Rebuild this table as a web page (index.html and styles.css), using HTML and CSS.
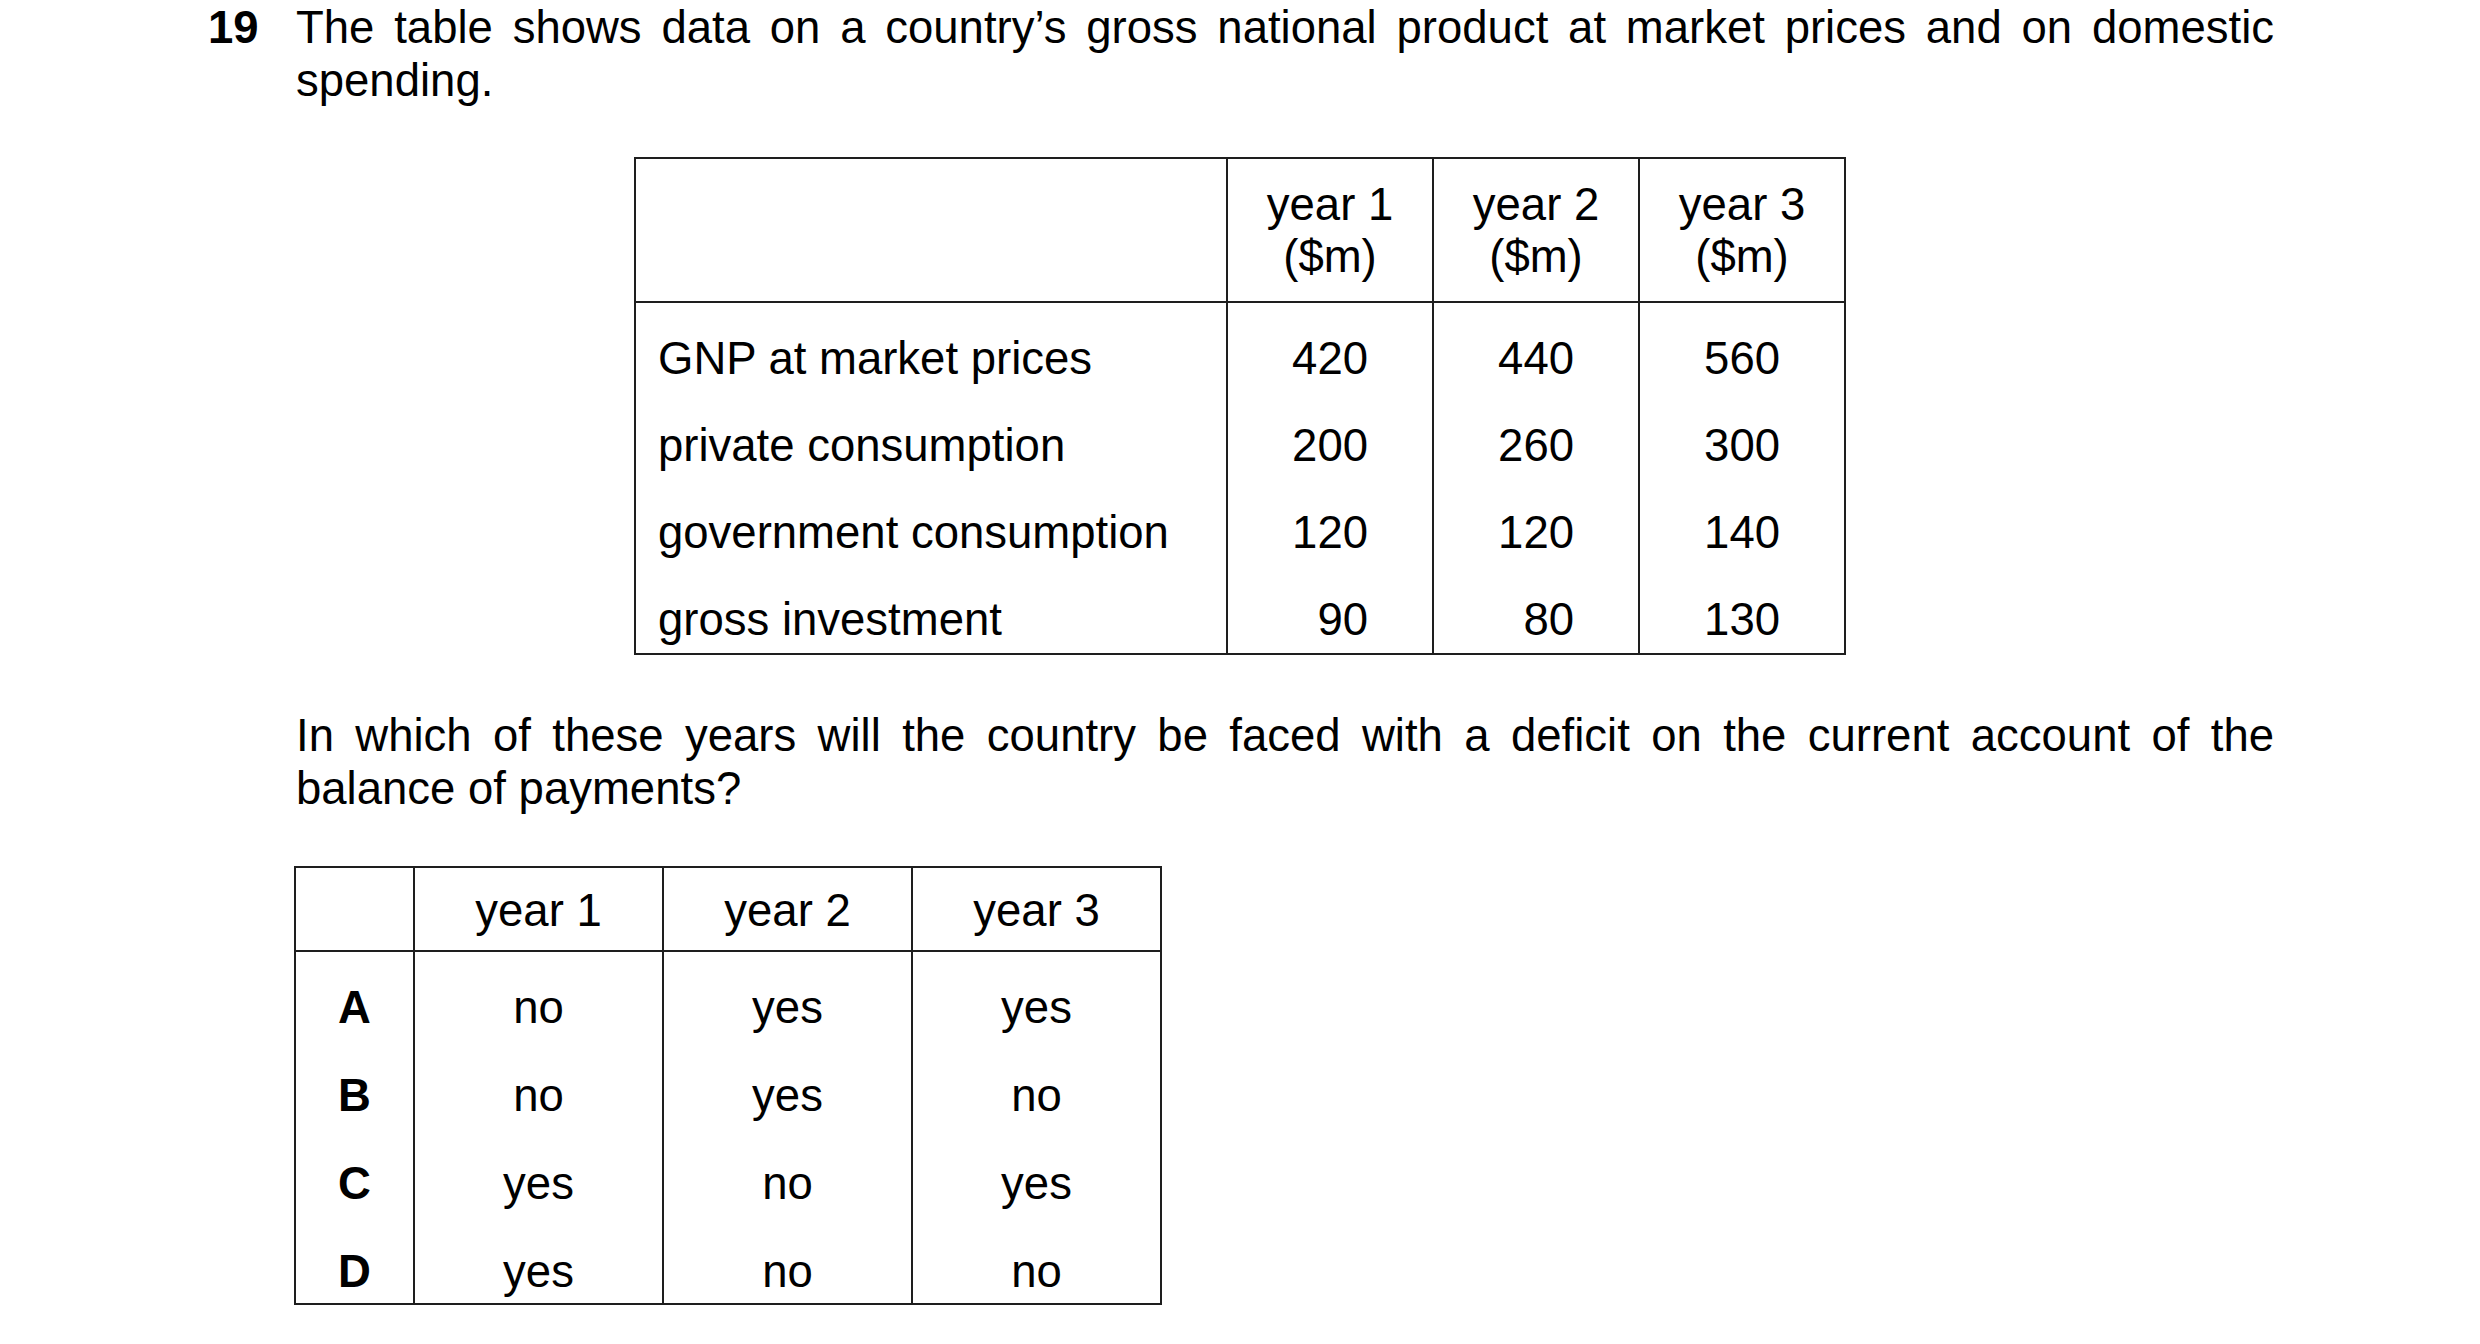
FILE: index.html
```html
<!DOCTYPE html>
<html lang="en">
<head>
<meta charset="utf-8">
<title>Question 19</title>
<link rel="stylesheet" href="styles.css">
</head>
<body>
<div class="question">
  <div class="qnum">19</div>
  <div class="qbody">
    <p class="para">The table shows data on a country’s gross national product at market prices and on domestic spending.</p>

    <table class="data">
      <colgroup>
        <col class="c-label">
        <col class="c-year">
        <col class="c-year">
        <col class="c-year">
      </colgroup>
      <thead>
        <tr>
          <th></th>
          <th>year 1<br>($m)</th>
          <th>year 2<br>($m)</th>
          <th>year 3<br>($m)</th>
        </tr>
      </thead>
      <tbody>
        <tr class="first"><td class="label">GNP at market prices</td><td class="num">420</td><td class="num">440</td><td class="num">560</td></tr>
        <tr><td class="label">private consumption</td><td class="num">200</td><td class="num">260</td><td class="num">300</td></tr>
        <tr><td class="label">government consumption</td><td class="num">120</td><td class="num">120</td><td class="num">140</td></tr>
        <tr class="last"><td class="label">gross investment</td><td class="num">90</td><td class="num">80</td><td class="num">130</td></tr>
      </tbody>
    </table>

    <p class="para para2">In which of these years will the country be faced with a deficit on the current account of the balance of payments?</p>

    <table class="answers">
      <colgroup>
        <col class="a-key">
        <col class="a-year">
        <col class="a-year">
        <col class="a-year">
      </colgroup>
      <thead>
        <tr><th></th><th>year 1</th><th>year 2</th><th>year 3</th></tr>
      </thead>
      <tbody>
        <tr class="first"><td class="key">A</td><td>no</td><td>yes</td><td>yes</td></tr>
        <tr><td class="key">B</td><td>no</td><td>yes</td><td>no</td></tr>
        <tr><td class="key">C</td><td>yes</td><td>no</td><td>yes</td></tr>
        <tr class="last"><td class="key">D</td><td>yes</td><td>no</td><td>no</td></tr>
      </tbody>
    </table>
  </div>
</div>
</body>
</html>
```

FILE: styles.css
```css
html, body {
  margin: 0;
  padding: 0;
  background: #ffffff;
}

body {
  padding-top: 1px;
  font-family: "Liberation Sans", Arial, sans-serif;
  font-size: 45.5px;
  line-height: 52px;
  color: #000000;
}

.question {
  display: flex;
  align-items: flex-start;
}

.qnum {
  width: 88px;
  padding-left: 208px;
  font-weight: bold;
  line-height: 53px;
  flex: none;
}

.qbody {
  width: 1978px;
  flex: none;
}

.para {
  margin: 0;
  line-height: 53px;
  text-align: justify;
}

.para2 {
  margin-top: 54px;
}

table {
  border-collapse: collapse;
  table-layout: fixed;
}

th, td {
  border: 2px solid #1e1e1e;
  padding: 0;
  font-weight: normal;
  vertical-align: top;
}

tbody td {
  border-top: none;
  border-bottom: none;
  padding-top: 35px;
}

tbody tr.first td {
  padding-top: 30px;
}

tbody tr.last td {
  padding-bottom: 7px;
  border-bottom: 2px solid #1e1e1e;
}

/* data table */
.data {
  margin-top: 50px;
  margin-left: 338px;
  width: 1212px;
}

.data .c-label { width: 592px; }
.data .c-year { width: 206px; }

.data th {
  text-align: center;
  padding: 20px 0 18px;
}

.data td.label {
  padding-left: 22px;
  text-align: left;
}

.data td.num {
  text-align: right;
  padding-right: 64px;
}

/* answer table */
.answers {
  margin-top: 51px;
  margin-left: -2px;
  width: 867px;
}

.answers .a-key { width: 119px; }
.answers .a-year { width: 249px; }

.answers th {
  text-align: center;
  padding: 17px 0 13px;
}

.answers tbody td {
  padding-top: 36px;
}

.answers tbody tr.first td {
  padding-top: 30px;
}

.answers tbody tr.last td {
  padding-bottom: 5px;
}

.answers td {
  text-align: center;
}

.answers td.key {
  font-weight: bold;
}
```
